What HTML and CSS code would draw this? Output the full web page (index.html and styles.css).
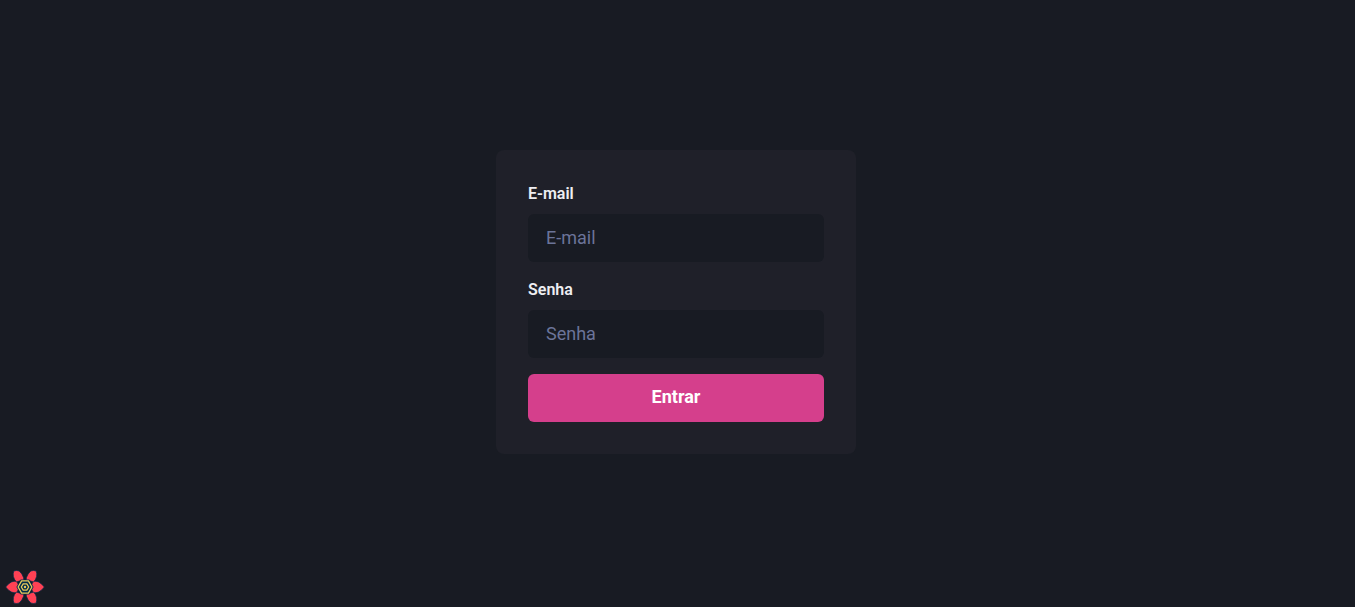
FILE: index.html
```html
<!DOCTYPE html>
<html lang="pt-BR">
<head>
<meta charset="utf-8">
<title>Entrar</title>
<link rel="stylesheet" href="styles.css">
</head>
<body>
<main class="page">
  <form class="card">
    <div class="field">
      <label class="label" for="email">E-mail</label>
      <input class="input" id="email" type="email" placeholder="E-mail">
    </div>
    <div class="field">
      <label class="label" for="password">Senha</label>
      <input class="input" id="password" type="password" placeholder="Senha">
    </div>
    <button class="submit" type="submit">Entrar</button>
  </form>
</main>
<button class="devtools" type="button" aria-label="Open React Query Devtools">
  <svg class="devtools-logo" viewBox="0 0 40 40" aria-hidden="true">
    <defs>
      <path id="petal" d="M26.500 18 L28.300 14.200 Q31 13.900 33.500 14.900 Q37 16.600 39.300 20 Q37 23.400 33.500 25.100 Q31 26.100 28.300 25.800 L26.500 22 Z"/>
      <path id="upright-petal" d="M31.200 4 Q28.500 2.900 25.800 4 Q22.700 6.600 21.500 10.500 L21 13.800 L25 13.800 L28.600 15 Q30.900 12.500 31.600 9.500 Q32.100 6.500 31.200 4 Z"/>
    </defs>
    <g fill="#ff4154" stroke="#002c4b" stroke-width="0.700" stroke-linejoin="round">
      <use href="#petal"/>
      <use href="#petal" transform="rotate(180 20 20)"/>
      <use href="#upright-petal"/>
      <use href="#upright-petal" transform="translate(40 0) scale(-1 1)"/>
      <use href="#upright-petal" transform="translate(0 40) scale(1 -1)"/>
      <use href="#upright-petal" transform="rotate(180 20 20)"/>
    </g>
    <path fill="#002c4b" d="M15.700 12.500h8.600l4.300 7.500-4.300 7.500h-8.600l-4.300-7.500z"/>
    <g fill="none" stroke="#e9c95b" stroke-width="1.300" stroke-linejoin="round">
      <path d="M16.600 13.900h6.800l3.500 6.100-3.500 6.100h-6.800L13.100 20z"/>
      <path d="M18.200 16.800h3.600l1.900 3.200-1.900 3.200h-3.600L16.300 20z"/>
    </g>
    <circle cx="20" cy="20" r="1.200" fill="#e9c95b"/>
  </svg>
</button>
</body>
</html>
```
FILE: styles.css
```css
* {
  box-sizing: border-box;
}

body {
  margin: 0;
  background: #181b23;
  color: #eeeef2;
  font-family: Roboto, sans-serif;
  font-size: 16px;
  line-height: 24px;
}

.page {
  display: flex;
  align-items: center;
  justify-content: center;
  min-height: 100vh;
  padding: 0 3px 3px 0;
}

.card {
  display: flex;
  flex-direction: column;
  gap: 16px;
  width: 100%;
  max-width: 360px;
  padding: 32px;
  border-radius: 8px;
  background: #1f2029;
}

.field {
  display: flex;
  flex-direction: column;
  gap: 8px;
}

.label {
  font-weight: 600;
}

.input {
  width: 100%;
  height: 48px;
  padding: 0 18px 2px;
  border: 0;
  border-radius: 6px;
  background: #181b23;
  color: inherit;
  font: inherit;
  font-size: 18px;
}

.input::placeholder {
  color: #6b7499;
  opacity: 1;
}

.submit {
  height: 48px;
  padding: 0 24px 2px;
  border: 0;
  border-radius: 6px;
  background: #d53f8c;
  color: #ffffff;
  font: inherit;
  font-size: 18px;
  font-weight: 700;
  cursor: pointer;
}

.devtools {
  position: fixed;
  left: 5px;
  bottom: 0;
  padding: 0;
  border: 0;
  background: none;
  cursor: pointer;
}

.devtools-logo {
  display: block;
  width: 40px;
  height: 40px;
}
```
